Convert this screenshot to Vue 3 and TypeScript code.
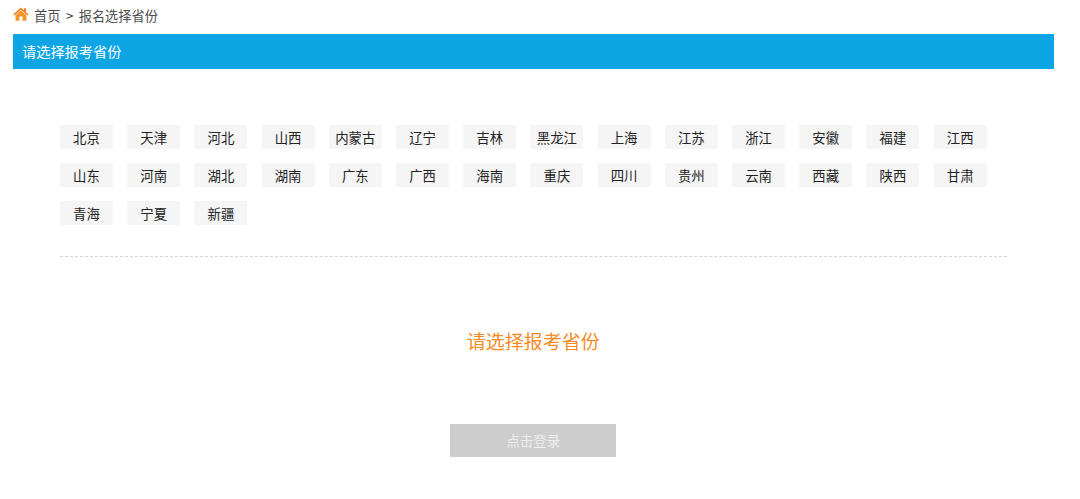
<script setup lang="ts">
const provinces: string[] = [
  '北京','天津','河北','山西','内蒙古','辽宁','吉林','黑龙江','上海','江苏','浙江','安徽','福建','江西',
  '山东','河南','湖北','湖南','广东','广西','海南','重庆','四川','贵州','云南','西藏','陕西','甘肃',
  '青海','宁夏','新疆'
]
</script>

<template>
  <div class="page">
    <nav class="crumbs">
      <svg class="home" width="16" height="14" viewBox="0 0 16 14" aria-hidden="true">
        <path d="M8 .6 .4 7.3l1 1.1L8 2.7l6.6 5.7 1-1.1-2.7-2.4V1.3h-2v2.2z" fill="#f57c10" />
        <path d="M8 3.6 2.6 8.3v5.4h3.8V9.6h3.2v4.1h3.8V8.3z" fill="#f8922c" />
      </svg>
      <span>首页</span>
      <span class="sep">&gt;</span>
      <span>报名选择省份</span>
    </nav>
    <h1 class="bar">请选择报考省份</h1>
    <section class="body">
      <ul class="chips">
        <li v-for="p in provinces" :key="p" class="chip">{{ p }}</li>
      </ul>
      <h2 class="prompt">请选择报考省份</h2>
      <button class="login" type="button" disabled>点击登录</button>
    </section>
  </div>
</template>

<style scoped>
.page {
  width: 1041.5px;
  margin-left: 12.5px;
  font-family: "Microsoft YaHei", "Noto Sans CJK SC", "Liberation Sans", sans-serif;
  color: #333;
}
.crumbs {
  height: 34px;
  display: flex;
  align-items: center;
  font-size: 13.2px;
  line-height: 16px;
  color: #4d4d4d;
  padding-bottom: 3px;
  padding-left: 0.5px;
  box-sizing: border-box;
}
.home { margin-right: 5px; margin-top: -4px; }
.sep { margin: 0 5.5px; color: #333; }
.bar {
  margin: 0;
  height: 34.5px;
  line-height: 34px;
  padding-left: 9.5px;
  background: #0ea5e4;
  color: #fff;
  font-size: 14.2px;
  font-weight: 400;
}
.body {
  padding: 56px 47.5px 0;
}
.chips {
  list-style: none;
  margin: 0;
  padding: 0 0 31px;
  border-bottom: 1px dashed #d4d4d4;
  display: grid;
  grid-template-columns: repeat(14, 53px);
  column-gap: 14.21px;
  row-gap: 14px;
}
.chip {
  height: 24px;
  line-height: 24px;
  background: #f5f5f5;
  text-align: center;
  font-size: 13.4px;
  color: #222;
  white-space: nowrap;
}
.prompt {
  margin: 70px 0 0;
  text-align: center;
  font-size: 19px;
  line-height: 28px;
  font-weight: 400;
  color: #f98a1f;
}
.login {
  display: block;
  margin: 69px auto 0;
  width: 166px;
  height: 33px;
  padding: 0;
  border: 0;
  background: #cdcdcd;
  color: #eee;
  font-family: inherit;
  font-size: 13.4px;
}
</style>
